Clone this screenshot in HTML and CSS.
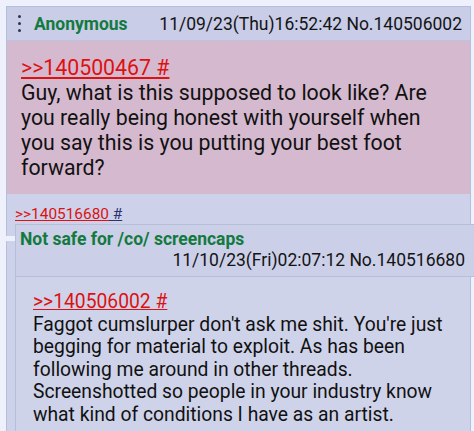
FILE: index.html
```html
<!DOCTYPE html>
<html lang="en">
  <head>
    <meta charset="UTF-8" />
    <meta name="viewport" content="width=device-width, initial-scale=1.0" />
    <title>/co/ - No.140506002</title>
    <link rel="stylesheet" href="styles.css">
  </head>
  <body>
    <div class="thread">
      <div class="post">
        <div class="post-head">
          <span class="menu"><i></i><i></i><i></i></span>
          <span class="name">Anonymous</span>
          <span class="stamp">11/09/23(Thu)16:52:42 No.140506002</span>
        </div>
        <div class="post-body highlight">
          <a class="quote" href="#p140500467">&gt;&gt;140500467 #</a>
          <p>Guy, what is this supposed to look like? Are you really being honest with yourself when you say this is you putting your best foot forward?</p>
        </div>
        <div class="backlinks">
          <a class="quote" href="#p140516680">&gt;&gt;140516680</a><a class="hash" href="#p140516680"> #</a>
        </div>
        <div class="inline">
          <div class="inline-head">
            <div class="subject">Not safe for /co/ screencaps</div>
            <div class="stamp right">11/10/23(Fri)02:07:12 No.140516680</div>
          </div>
          <div class="inline-body">
            <a class="quote" href="#p140506002">&gt;&gt;140506002 #</a>
            <p>Faggot cumslurper don't ask me shit. You're just begging for material to exploit. As has been following me around in other threads. Screenshotted so people in your industry know what kind of conditions I have as an artist.</p>
          </div>
        </div>
      </div>
      <span class="grip"></span>
    </div>
  </body>
</html>
```

FILE: styles.css
```css
* {
  margin: 0;
  padding: 0;
  box-sizing: border-box;
}

body {
  background-color: #eef1fb;
  font-family: Roboto, "Noto Sans", sans-serif;
  color: #111;
  overflow: hidden;
}

.thread {
  position: relative;
  padding: 6px 3px 0 6px;
}

.post {
  border: 1px solid #b4c0d8;
  background-color: #cdd1e9;
}

.post-head {
  display: flex;
  align-items: center;
  height: 34px;
  padding: 0 8px 0 11px;
  font-size: 17.5px;
  border-bottom: 1px solid #bcc3dc;
  background-color: #c9cde7;
}

.menu {
  display: flex;
  flex-direction: column;
  gap: 4px;
  margin-right: 13px;
}

.menu i {
  display: block;
  width: 3px;
  height: 3px;
  border-radius: 50%;
  background-color: #2f3350;
}

.name {
  font-weight: bold;
  color: #137a3f;
}

.stamp {
  margin-left: auto;
  color: #141414;
}

.post-body {
  padding: 14px 12px 14px 14px;
  font-size: 21.3px;
  line-height: 25px;
}

.highlight {
  background-color: #d5b9cf;
}

.quote {
  color: #dd1111;
}

.hash {
  color: #2d3270;
}

.backlinks {
  padding: 11px 0 0 8px;
  height: 30px;
  font-size: 15.4px;
  line-height: 18px;
}

.inline {
  margin-left: 8px;
  border-left: 1px solid #b4c0d8;
}

.inline-head {
  margin-right: -12px;
  padding: 4px 17px 5px 4px;
  border-top: 1px solid #b4c0d8;
  border-bottom: 1px solid #b4c0d8;
  background-color: #cbcfe8;
  font-size: 17.5px;
  line-height: 21px;
}

.subject {
  font-weight: bold;
  color: #137a3f;
}

.right {
  text-align: right;
}

.inline-body {
  padding: 14px 10px 12px 17px;
  font-size: 19.3px;
  line-height: 22.5px;
  background-color: #cfd3ea;
}

.grip {
  position: absolute;
  left: 0;
  top: 236px;
  width: 15px;
  height: 5px;
  background-color: #eef1fb;
}
```
